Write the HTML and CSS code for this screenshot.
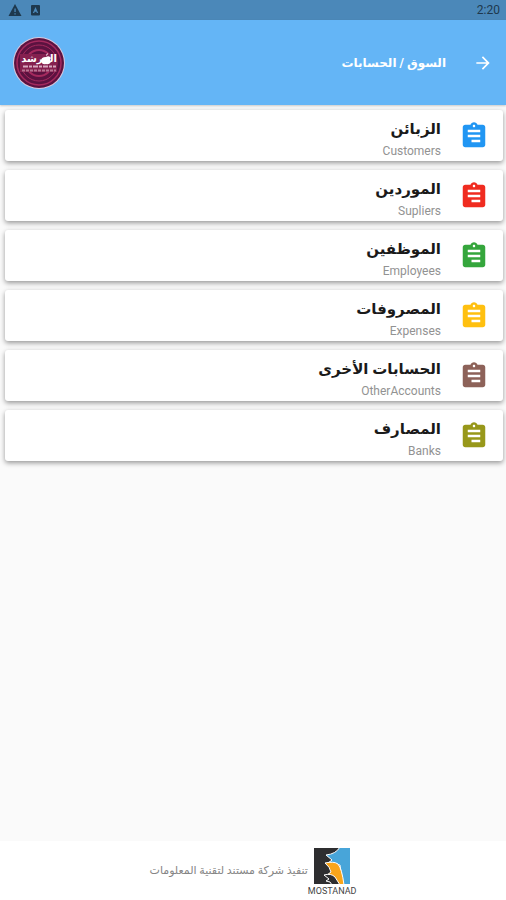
FILE: index.html
```html
<!DOCTYPE html>
<html lang="ar" dir="rtl">
<head>
<meta charset="utf-8">
<meta name="viewport" content="width=device-width, initial-scale=1">
<title>السوق / الحسابات</title>
<link rel="stylesheet" href="styles.css">
</head>
<body>
<svg class="defs" aria-hidden="true">
  <symbol id="clipboard" viewBox="0 0 24 24">
    <path transform="translate(24 0) scale(-1 1)" d="M19 3h-4.18C14.4 1.84 13.3 1 12 1c-1.3 0-2.4.84-2.82 2H5c-1.1 0-2 .9-2 2v14c0 1.1.9 2 2 2h14c1.1 0 2-.9 2-2V5c0-1.1-.9-2-2-2zm-7 0c.55 0 1 .45 1 1s-.45 1-1 1-1-.45-1-1 .45-1 1-1zm2 14H7v-2h7v2zm3-4H7v-2h10v2zm0-4H7V7h10v2z"/>
  </symbol>
</svg>
<div class="status" dir="ltr">
  <svg class="status-icon" viewBox="0 0 14 14"><path fill="#1e384d" d="M7 1 13.5 13H.5z"/><path fill="#4b88b9" d="M6.4 5.5h1.3v3.6H6.4zM6.4 10.2h1.3v1.4H6.4z"/></svg>
  <svg class="status-icon" viewBox="0 0 14 14"><path fill="#1e384d" fill-rule="evenodd" d="M4 2h7q1 0 1 1v8.500q0 1-1 1H4q-1 0-1-1V3q0-1 1-1zM7.500 4 4.800 10h1.400l.5-1.200h1.600l.5 1.200h1.400z"/></svg>
  <span class="clock">2:20</span>
</div>
<header class="bar">
  <button class="back" aria-label="رجوع"><svg viewBox="0 0 24 24"><path fill="#fff" d="m12 4-1.410 1.410L16.170 11H4v2h12.170l-5.580 5.590L12 20l8-8z"/></svg></button>
  <h1>السوق / الحسابات</h1>
  <svg class="brand" viewBox="0 0 52 52">
    <circle cx="26" cy="26" r="26" fill="#d9c7dc"/>
    <circle cx="26" cy="26" r="25" fill="#5c1240"/>
    <g fill="none" stroke="#a52a5e">
      <circle cx="26" cy="26" r="22" stroke-width="1.500"/>
      <circle cx="26" cy="26" r="18"/>
      <circle cx="26" cy="26" r="13" stroke-width="2"/>
    </g>
    <path fill="#85204f" d="M7 17h37v18H7z"/>
    <text class="brand-name" x="26" y="25" text-anchor="middle">المرشد</text>
    <path fill="#fff" d="M33 20q3-2 5 1-2 2 0 4-2 3-5 2-4 1-5-3 0-4 5-4zM33 19q0-2 2-3 0 2-2 3z"/>
    <path stroke="#d7a8bf" stroke-width="2" stroke-dasharray="5 1 3 1" d="M10 29.500h33"/>
    <path stroke="#b87593" stroke-width="2" stroke-dasharray="3 1" d="M9 33.500h34"/>
  </svg>
</header>
<main class="list">
  <a class="card" href="#customers"><svg class="icon blue"><use href="#clipboard"/></svg><span class="label"><strong>الزبائن</strong><small>Customers</small></span></a>
  <a class="card" href="#suppliers"><svg class="icon red"><use href="#clipboard"/></svg><span class="label"><strong>الموردين</strong><small>Supliers</small></span></a>
  <a class="card" href="#employees"><svg class="icon green"><use href="#clipboard"/></svg><span class="label"><strong>الموظفين</strong><small>Employees</small></span></a>
  <a class="card" href="#expenses"><svg class="icon amber"><use href="#clipboard"/></svg><span class="label"><strong>المصروفات</strong><small>Expenses</small></span></a>
  <a class="card" href="#other"><svg class="icon brown"><use href="#clipboard"/></svg><span class="label"><strong>الحسابات الأخرى</strong><small>OtherAccounts</small></span></a>
  <a class="card" href="#banks"><svg class="icon olive"><use href="#clipboard"/></svg><span class="label"><strong>المصارف</strong><small>Banks</small></span></a>
</main>
<footer class="credit">
  <div class="maker">
    <svg viewBox="0 0 36 36">
      <path fill="#2e2e30" d="M0 0h36v36H0z"/>
      <path fill="#48a5d9" stroke="#fff" d="M26-1h11v38h-8l-3-20-12-2 4-3-6-5q10-1 14-8z"/>
      <path fill="#f9a51a" stroke="#fff" d="M11 15q9-2 13 1 4 5 6 21h-6l-5-8-6-2 4-3q-1-5-6-9z"/>
      <path fill="#2e2e30" stroke="#fff" d="M10 27q7-2 11 2l5 8h-8q-1-4-6-4l3-2z"/>
    </svg>
    <span dir="ltr">MOSTANAD</span>
  </div>
  <p>تنفيذ شركة مستند لتقنية المعلومات</p>
</footer>
</body>
</html>
```
FILE: styles.css
```css
* { box-sizing: border-box; }
body {
  margin: 0;
  min-height: 100vh;
  display: flex;
  flex-direction: column;
  background: #fafafa;
  font-family: Roboto, "DejaVu Sans", sans-serif;
}
.defs { display: none; }
.status {
  display: flex;
  align-items: center;
  gap: 6px;
  height: 20px;
  padding: 0 6px 0 8px;
  background: #4b88b9;
  color: #1e384d;
}
.status-icon { width: 14px; height: 14px; }
.clock { margin-left: auto; font-size: 12px; line-height: 20px; }
.bar {
  display: flex;
  align-items: center;
  height: 85px;
  padding: 0 13px;
  background: #64b5f6;
  color: #fff;
  box-shadow: 0 1px 2px rgba(0, 0, 0, .2);
}
.back {
  width: 20px;
  height: 20px;
  padding: 0;
  border: 0;
  background: none;
}
.back svg { display: block; width: 100%; height: 100%; }
.bar h1 {
  flex: 1;
  margin: 0 27px 0 0;
  font-size: 12px;
  line-height: 20px;
}
.brand { width: 52px; height: 52px; }
.brand-name { font: bold 10px "DejaVu Sans", sans-serif; fill: #fff; }
.list {
  flex: 1;
  display: flex;
  flex-direction: column;
  gap: 9px;
  padding: 5px 3px 5px 5px;
}
.card {
  display: flex;
  align-items: center;
  gap: 18px;
  height: 51px;
  padding: 0 14px;
  border-radius: 3px;
  background: #fff;
  box-shadow: 0 2px 5px rgba(0, 0, 0, .4);
  color: #1a1a1a;
  text-decoration: none;
}
.icon { width: 30px; height: 30px; }
.label { display: flex; flex-direction: column; padding-top: 6px; }
.label strong { font-size: 15px; line-height: 24px; }
.label small { font-size: 12px; line-height: 20px; color: #929292; }
.blue { fill: #2196f3; }
.red { fill: #f02c20; }
.green { fill: #35a63c; }
.amber { fill: #ffc010; }
.brown { fill: #8d6259; }
.olive { fill: #98981a; }
.credit {
  display: flex;
  align-items: center;
  justify-content: center;
  height: 59px;
  background: #fff;
}
.maker {
  display: flex;
  flex-direction: column;
  align-items: center;
  padding-top: 2px;
  font-size: 9px;
  line-height: 10px;
  color: #444;
}
.maker svg { width: 36px; height: 36px; margin-bottom: 2px; }
.credit p { margin: 0; font-size: 11px; line-height: 16px; color: #858585; }
```
